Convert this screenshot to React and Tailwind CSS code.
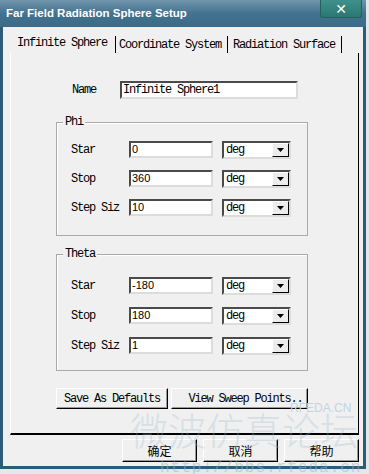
import React from 'react'

const mono = { fontFamily: '"Liberation Mono", "DejaVu Sans Mono", monospace' }

const Field = ({ value, className = '' }) => (
    <div className={`h-[17px] bg-white border-2 border-t-[#4a4a4a] border-l-[#4a4a4a] border-r-[#dcdcdc] border-b-[#dcdcdc] flex items-center pl-[1px] text-[11px] text-black leading-none ${className}`}
        style={{ fontFamily: '"Liberation Sans", Arial, sans-serif' }}>
        {value}
    </div>
)

const Unit = () => (
    <div className="ml-[9px] w-[69px] h-[18px] bg-white border-2 border-t-[#4a4a4a] border-l-[#4a4a4a] border-r-[#dcdcdc] border-b-[#dcdcdc] flex items-center">
        <span className="pl-[2px] text-[12px] tracking-[-1.2px] leading-none" style={mono}>deg</span>
        <div className="ml-auto w-[17px] h-[14px] bg-[#ececec] border border-t-white border-l-white border-b-black border-r-black flex items-center justify-center">
            <svg width="7" height="4" viewBox="0 0 7 4"><polygon points="0,0 7,0 3.5,4" fill="#000" /></svg>
        </div>
    </div>
)

const Row = ({ label, value }) => (
    <div className="flex items-center h-[17px]">
        <span className="w-[58px] text-[12px] tracking-[-1.2px] leading-none text-black" style={mono}>{label}</span>
        <Field value={value} className="w-[84px]" />
        <Unit />
    </div>
)

const Group = ({ title, rows, className }) => (
    <div className={`relative ml-[45px] w-[252px] border border-[#a9a9a9] shadow-[inset_1px_1px_0_#fff] flex flex-col pl-[14px] ${className}`}>
        <span className="absolute -top-[7px] left-[6px] px-[2px] bg-[#f0f0f0] text-[12px] tracking-[-1.2px] leading-[12px]" style={mono}>{title}</span>
        {rows.map(r => <Row key={r[0]} label={r[0]} value={r[1]} />)}
    </div>
)

const RaisedButton = ({ children, className = '', style }) => (
    <div className={`bg-[#f0f0f0] border border-t-white border-l-white border-b-black border-r-black shadow-[inset_-1px_-1px_0_#9a9a9a] flex items-center justify-center text-black leading-none ${className}`} style={style}>
        {children}
    </div>
)

export default function App() {
    return (
        <div className="relative w-[369px] h-[474px] bg-[#e4e8ea] overflow-hidden">
            <div className="w-[366px] h-[469px] flex flex-col">

                {/* Title bar */}
                <div className="h-[27px] flex items-start bg-gradient-to-b from-[#7196ad] via-[#43728f] to-[#3b6b89]">
                    <span className="pl-[6px] pt-[8px] text-[11.5px] font-bold text-white leading-none"
                        style={{ fontFamily: '"Liberation Sans", Arial, sans-serif' }}>
                        Far Field Radiation Sphere Setup
                    </span>
                    <div className="ml-auto mr-[4px] w-[42px] h-[18px] bg-gradient-to-b from-[#3f918b] to-[#2b7872] border border-t-0 border-[#245f5c] rounded-b-[3px] flex items-center justify-center">
                        <span className="text-white font-bold text-[14px] leading-none" style={{ fontFamily: '"DejaVu Sans", sans-serif' }}>✕</span>
                    </div>
                </div>

                {/* Body */}
                <div className="flex-1 bg-[#f0f0f0] border-l-[3px] border-r-[3px] border-b-[3px] border-[#2e5b78] flex flex-col">

                    {/* Tabs */}
                    <div className="mt-[8px] h-[18px] flex items-center pl-[14px] text-[12px] tracking-[-1.2px] leading-none text-black" style={mono}>
                        <span className="w-[98px] pb-[2px]">Infinite Sphere</span>
                        <div className="w-px h-[17px] bg-black" />
                        <span className="w-[111px] pl-[3px] pt-[2px]">Coordinate System</span>
                        <div className="w-px h-[17px] bg-black" />
                        <span className="w-[113px] pl-[5px] pt-[2px]">Radiation Surface</span>
                        <div className="w-px h-[17px] bg-black" />
                    </div>

                    {/* Tab panel */}
                    <div className="ml-[7px] w-[349px] h-[382px] border-l border-l-white border-r border-r-black border-b-2 border-b-black flex flex-col">
                        <div className="mt-[28px] flex items-center h-[18px]">
                            <span className="pl-[61px] w-[109px] text-[12px] tracking-[-1.2px] leading-none" style={mono}>Name</span>
                            <div className="w-[178px] h-[18px] bg-white border-2 border-t-[#4a4a4a] border-l-[#4a4a4a] border-r-[#dcdcdc] border-b-[#dcdcdc] flex items-center pl-[1px] text-[12px] tracking-[-1.2px] leading-none" style={mono}>
                                Infinite Sphere1
                            </div>
                        </div>

                        <Group title="Phi" className="mt-[23px] h-[114px] pt-[18px] gap-[12px]"
                            rows={[['Star', '0'], ['Stop', '360'], ['Step Siz', '10']]} />

                        <Group title="Theta" className="mt-[18px] h-[117px] pt-[22px] gap-[13px]"
                            rows={[['Star', '-180'], ['Stop', '180'], ['Step Siz', '1']]} />

                        <div className="mt-[17px] ml-[45px] flex h-[21px]">
                            <RaisedButton className="w-[112px] text-[12px] tracking-[-1.2px]" style={mono}>Save As Defaults</RaisedButton>
                            <RaisedButton className="ml-[3px] w-[137px] text-[12px] tracking-[-1.2px] pl-[12px]" style={mono}>View Sweep Points..</RaisedButton>
                        </div>
                    </div>

                    {/* Bottom buttons */}
                    <div className="mt-[4px] flex pl-[119px] gap-[6px] h-[23px]">
                        {['确定', '取消', '帮助'].map(t => (
                            <RaisedButton key={t} className="w-[75px] text-[12px]" style={{ fontFamily: '"Noto Sans CJK SC", sans-serif' }}>{t}</RaisedButton>
                        ))}
                    </div>
                </div>
            </div>

            {/* Watermark */}
            <div className="absolute left-[290px] top-[402px] text-[12px] text-[#c3d4df] pointer-events-none leading-none"
                style={{ fontFamily: '"Liberation Sans", Arial, sans-serif' }}>RFEDA.CN</div>
            <div className="absolute left-[130px] top-[410px] w-[225px] flex justify-between text-[38px] font-light text-[#9db9ca] opacity-30 pointer-events-none leading-none"
                style={{ fontFamily: '"Noto Sans CJK SC", sans-serif' }}>
                <span>微</span><span>波</span><span>仿</span><span>真</span><span>论</span><span>坛</span>
            </div>
            <div className="absolute left-[160px] top-[460px] text-[16px] text-[#9ab6c8] opacity-50 pointer-events-none leading-none tracking-[1px]"
                style={mono}>http://bbs.rfeda.cn</div>
        </div>
    )
}
